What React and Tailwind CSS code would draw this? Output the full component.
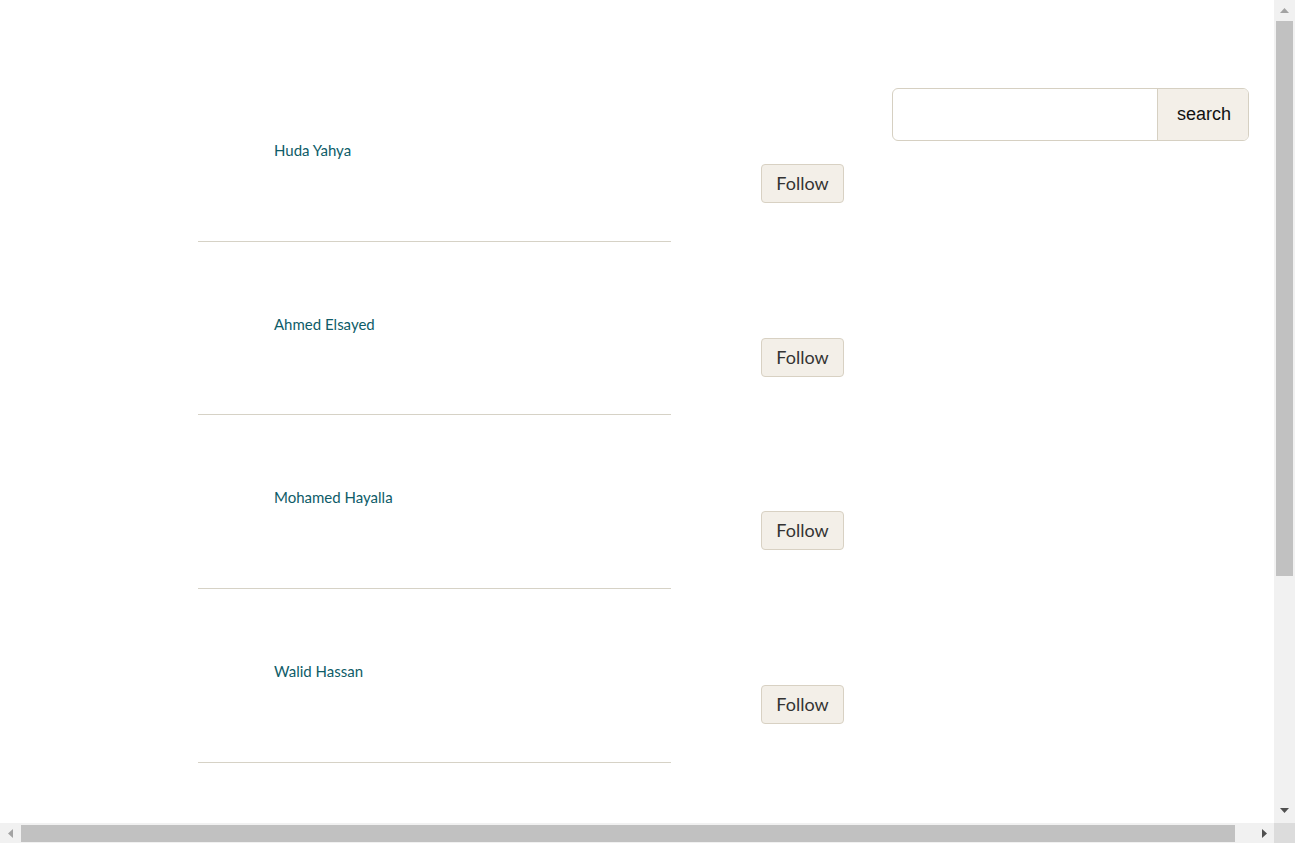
const people = ['Huda Yahya', 'Ahmed Elsayed', 'Mohamed Hayalla', 'Walid Hassan'];

function Arrow({ dir, color }) {
  const vertical = dir === 'up' || dir === 'down';
  const points = {
    up: '0,5 4.5,0 9,5',
    down: '0,0 4.5,5 9,0',
    left: '5,0 0,4.5 5,9',
    right: '0,0 5,4.5 0,9',
  }[dir];
  return (
    <svg width={vertical ? 9 : 5} height={vertical ? 5 : 9} viewBox={vertical ? '0 0 9 5' : '0 0 5 9'}>
      <polygon points={points} fill={color} />
    </svg>
  );
}

export default function App() {
  return (
    <div className="w-[1295px] h-[843px] flex flex-col bg-white overflow-hidden font-['Lato',sans-serif]">
      <div className="flex flex-1 min-h-0">
        {/* Page content */}
        <div className="flex-1 min-w-0 overflow-hidden">
          <div className="w-[1293px] flex pt-[68px]">
            {/* People list */}
            <div className="ml-[198px] w-[646px] shrink-0">
              {people.map((name) => (
                <div key={name} className="flex h-[173.67px]">
                  <div className="w-[473px] shrink-0 border-b border-[#d6d2c6] pl-[76px] pt-[70px]">
                    <a href="#" className="text-[15px] leading-[18px] text-[#0e5c68]">
                      {name}
                    </a>
                  </div>
                  <div className="pl-[90px] pt-[96px]">
                    <button className="h-[39px] w-[83px] rounded-[4px] border border-[#d8d1c3] bg-[#f3efe8] text-[18px] text-[#333]">
                      Follow
                    </button>
                  </div>
                </div>
              ))}
            </div>

            {/* Search */}
            <div className="ml-[48px] mt-[20px]">
              <div className="flex h-[53px] w-[357px] rounded-[6px] border border-[#d6d0c2] overflow-hidden">
                <input type="text" className="flex-1 min-w-0 px-3 outline-none" />
                <button className="w-[91px] border-l border-[#d6d0c2] bg-[#f3efe8] pl-[2px] text-[18px] text-[#111] font-['Liberation_Sans',sans-serif]">
                  search
                </button>
              </div>
            </div>
          </div>
        </div>

        {/* Vertical scrollbar */}
        <div className="w-[21px] shrink-0 bg-[#f1f1f1] flex flex-col items-center">
          <div className="h-[21px] flex items-center justify-center">
            <Arrow dir="up" color="#a3a3a3" />
          </div>
          <div className="h-[555px] w-[17px] bg-[#c1c1c1]" />
          <div className="flex-1" />
          <div className="h-[21px] mb-[2px] flex items-center justify-center">
            <Arrow dir="down" color="#505050" />
          </div>
        </div>
      </div>

      {/* Horizontal scrollbar */}
      <div className="h-[20px] flex shrink-0">
        <div className="flex-1 bg-[#f1f1f1] flex items-center">
          <div className="w-[20px] flex items-center justify-center">
            <Arrow dir="left" color="#a3a3a3" />
          </div>
          <div className="ml-[1px] h-[17px] w-[1214px] bg-[#c1c1c1]" />
          <div className="flex-1" />
          <div className="w-[20px] flex items-center justify-center">
            <Arrow dir="right" color="#505050" />
          </div>
        </div>
        <div className="w-[21px] bg-[#dcdcdc]" />
      </div>
    </div>
  );
}
